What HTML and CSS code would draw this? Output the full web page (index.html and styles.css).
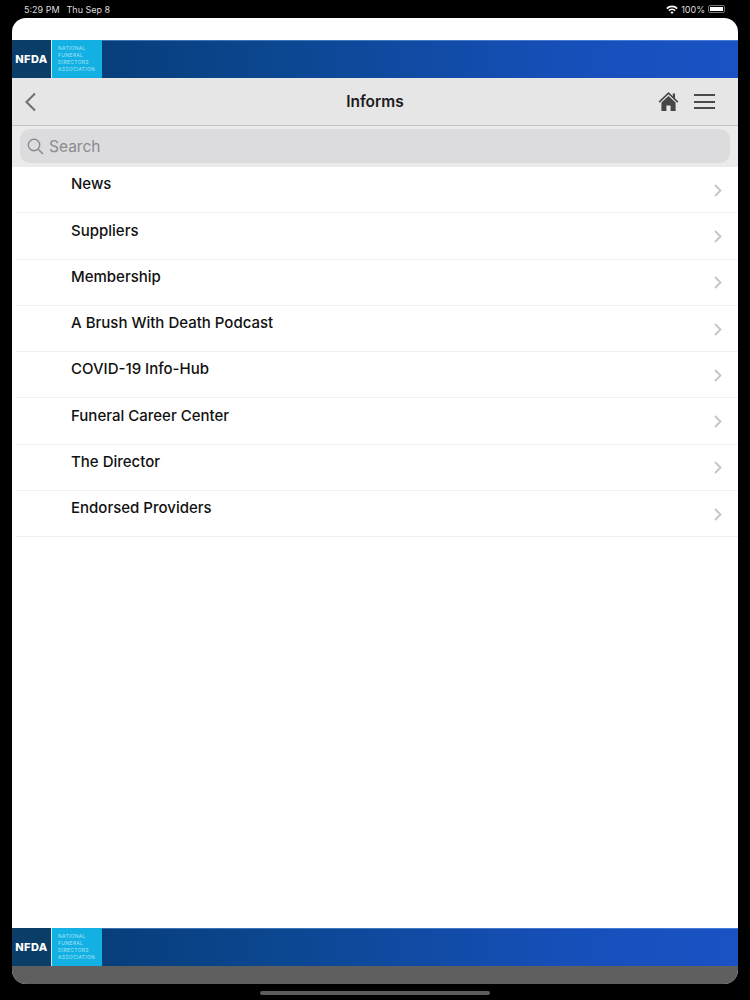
FILE: index.html
```html
<!DOCTYPE html>
<html lang="en">
<head>
    <meta charset="UTF-8">
    <meta name="viewport" content="width=device-width, initial-scale=1.0">
    <title>Informs</title>
    <link rel="stylesheet" href="styles.css">
</head>
<body>
    <!-- Статус-бар -->
    <div class="status">
        <div class="status-left">
            <span>5:29 PM</span>
            <span>Thu Sep 8</span>
        </div>
        <div class="status-right">
            <svg class="wifi" width="12" height="9" viewBox="0 0 12 9">
                <path d="M0.2 3 A8.2 8.2 0 0 1 11.8 3 L10.6 4.2 A6.5 6.5 0 0 0 1.4 4.2 Z" fill="#fff"/>
                <path d="M2.3 5.1 A5.3 5.3 0 0 1 9.7 5.1 L8.5 6.3 A3.6 3.6 0 0 0 3.5 6.3 Z" fill="#fff"/>
                <path d="M4.4 7.2 A2.3 2.3 0 0 1 7.6 7.2 L6 8.9 Z" fill="#fff"/>
            </svg>
            <span>100%</span>
            <div class="battery"><div class="battery-fill"></div></div>
        </div>
    </div>

    <div class="screen">
        <div class="top-gap"></div>

        <div class="banner">
            <div class="logo-dark">NFDA</div>
            <div class="logo-light">
                <span>NATIONAL</span>
                <span>FUNERAL</span>
                <span>DIRECTORS</span>
                <span>ASSOCIATION</span>
            </div>
        </div>

        <div class="navbar">
            <svg class="back" width="12" height="20" viewBox="0 0 12 20">
                <path d="M11 1.5 L2.5 10 L11 18.5" fill="none" stroke="#6e6e70" stroke-width="2"/>
            </svg>
            <div class="nav-title">Informs</div>
            <div class="nav-icons">
                <svg width="21" height="21" viewBox="0 0 21 21">
                    <path d="M0.6 10.6 L10.5 1 L14.8 5.2 L14.8 2.6 L17 2.6 L17 7.3 L20.4 10.6 L19.3 11.7 L10.5 3.3 L1.7 11.7 Z" fill="#464648"/>
                    <path d="M3.4 11.6 L10.5 4.9 L17.6 11.6 L17.6 20 L12.6 20 L12.6 14.6 L8.4 14.6 L8.4 20 L3.4 20 Z" fill="#464648"/>
                </svg>
                <div class="burger">
                    <div class="burger-line"></div>
                    <div class="burger-line"></div>
                    <div class="burger-line"></div>
                </div>
            </div>
        </div>

        <div class="search-wrap">
            <div class="search">
                <svg width="17" height="17" viewBox="0 0 17 17">
                    <circle cx="7" cy="7" r="5.7" fill="none" stroke="#8b8b8f" stroke-width="1.4"/>
                    <path d="M11.2 11.2 L16 16" fill="none" stroke="#8b8b8f" stroke-width="1.6"/>
                </svg>
                <span>Search</span>
            </div>
        </div>

        <ul class="list">
            <li><span>News</span><svg class="chev" width="8" height="13" viewBox="0 0 8 13"><path d="M1 1 L6.5 6.5 L1 12" fill="none" stroke="#c4c4c6" stroke-width="1.8"/></svg></li>
            <li><span>Suppliers</span><svg class="chev" width="8" height="13" viewBox="0 0 8 13"><path d="M1 1 L6.5 6.5 L1 12" fill="none" stroke="#c4c4c6" stroke-width="1.8"/></svg></li>
            <li><span>Membership</span><svg class="chev" width="8" height="13" viewBox="0 0 8 13"><path d="M1 1 L6.5 6.5 L1 12" fill="none" stroke="#c4c4c6" stroke-width="1.8"/></svg></li>
            <li><span>A Brush With Death Podcast</span><svg class="chev" width="8" height="13" viewBox="0 0 8 13"><path d="M1 1 L6.5 6.5 L1 12" fill="none" stroke="#c4c4c6" stroke-width="1.8"/></svg></li>
            <li><span>COVID-19 Info-Hub</span><svg class="chev" width="8" height="13" viewBox="0 0 8 13"><path d="M1 1 L6.5 6.5 L1 12" fill="none" stroke="#c4c4c6" stroke-width="1.8"/></svg></li>
            <li><span>Funeral Career Center</span><svg class="chev" width="8" height="13" viewBox="0 0 8 13"><path d="M1 1 L6.5 6.5 L1 12" fill="none" stroke="#c4c4c6" stroke-width="1.8"/></svg></li>
            <li><span>The Director</span><svg class="chev" width="8" height="13" viewBox="0 0 8 13"><path d="M1 1 L6.5 6.5 L1 12" fill="none" stroke="#c4c4c6" stroke-width="1.8"/></svg></li>
            <li><span>Endorsed Providers</span><svg class="chev" width="8" height="13" viewBox="0 0 8 13"><path d="M1 1 L6.5 6.5 L1 12" fill="none" stroke="#c4c4c6" stroke-width="1.8"/></svg></li>
        </ul>

        <div class="banner">
            <div class="logo-dark">NFDA</div>
            <div class="logo-light">
                <span>NATIONAL</span>
                <span>FUNERAL</span>
                <span>DIRECTORS</span>
                <span>ASSOCIATION</span>
            </div>
        </div>
        <div class="bottom-bar"></div>
    </div>

    <div class="home-wrap"><div class="home-indicator"></div></div>
</body>
</html>
```

FILE: styles.css
```css
html, body {
    margin: 0;
    padding: 0;
}

body {
    width: 750px;
    height: 1000px;
    overflow: hidden;
    background-color: #000;
    font-family: Inter, "Liberation Sans", sans-serif;
    display: flex;
    flex-direction: column;
}

.status {
    height: 18px;
    padding: 0 25px 0 24px;
    display: flex;
    justify-content: space-between;
    align-items: center;
    color: #dcdcdc;
    font-size: 9px;
}

.status-left {
    display: flex;
    gap: 7px;
}

.status-right {
    display: flex;
    align-items: center;
    gap: 3px;
}

.battery {
    width: 17px;
    height: 8px;
    padding: 1px;
    box-sizing: border-box;
    border: 1px solid #777;
    border-radius: 2px;
}

.battery-fill {
    height: 100%;
    background-color: #fff;
}

.screen {
    margin: 0 12px;
    height: 966px;
    background-color: #fff;
    border-radius: 14px;
    overflow: hidden;
    display: flex;
    flex-direction: column;
}

.top-gap {
    height: 22px;
}

.banner {
    height: 38px;
    flex-shrink: 0;
    display: flex;
    background: linear-gradient(90deg, #053a70 0%, #0b468f 35%, #1750bc 80%, #1a52c4 100%);
    box-shadow: inset 0 1px 0 rgba(130, 175, 235, 0.45);
}

.logo-dark {
    width: 39px;
    background-color: #0b3d69;
    border-right: 1px solid #cfeaf5;
    color: #fff;
    font-size: 11px;
    font-weight: 800;
    letter-spacing: 0.4px;
    display: flex;
    align-items: center;
    justify-content: center;
}

.logo-light {
    width: 50px;
    padding-left: 6px;
    box-sizing: border-box;
    background-color: #12b0e3;
    color: #a9e2f5;
    font-size: 5px;
    letter-spacing: 0.3px;
    line-height: 6.8px;
    display: flex;
    flex-direction: column;
    justify-content: center;
}

.navbar {
    height: 47px;
    flex-shrink: 0;
    background-color: #e6e6e7;
    border-bottom: 1px solid #c4c4c6;
    padding: 0 23px 0 12px;
    position: relative;
    display: flex;
    align-items: center;
    justify-content: space-between;
}

.nav-title {
    position: absolute;
    left: 0;
    right: 0;
    text-align: center;
    font-size: 15.5px;
    font-weight: 600;
    color: #1c1c1e;
}

.nav-icons {
    display: flex;
    align-items: center;
    gap: 15px;
}

.burger {
    width: 21px;
    display: flex;
    flex-direction: column;
    gap: 4.5px;
}

.burger-line {
    height: 2px;
    background-color: #4a4a4c;
}

.search-wrap {
    height: 41px;
    flex-shrink: 0;
    background-color: #ebebec;
    padding: 3px 8px 0 8px;
    box-sizing: border-box;
}

.search {
    height: 34px;
    background-color: #dcdbdd;
    border-radius: 10px;
    padding-left: 7px;
    display: flex;
    align-items: center;
    gap: 5px;
    color: #8b8b8f;
    font-size: 15.5px;
}

.list {
    list-style-type: none;
    margin: 0;
    padding: 0;
    flex: 1;
}

.list li {
    height: 46.25px;
    box-sizing: border-box;
    margin-left: 4px;
    border-bottom: 1px solid #f0f0f1;
    padding: 7.3px 16px 0 55px;
    display: flex;
    justify-content: space-between;
    color: #111;
    font-size: 15px;
    font-weight: 500;
}

.chev {
    margin-top: 9.6px;
}

.bottom-bar {
    height: 18px;
    flex-shrink: 0;
    background-color: #5f5f5f;
}

.home-wrap {
    flex: 1;
    display: flex;
    justify-content: center;
    align-items: center;
    padding-top: 1px;
}

.home-indicator {
    width: 230px;
    height: 4px;
    background-color: #5c5c5c;
    border-radius: 2px;
}
```
